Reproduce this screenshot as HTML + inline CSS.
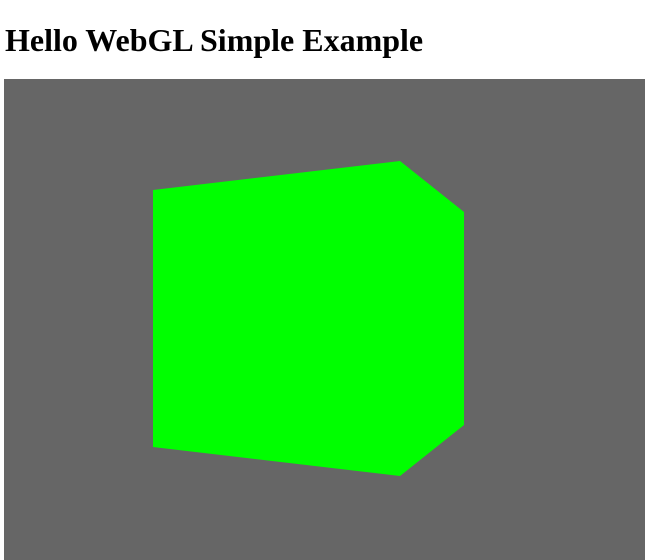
<!DOCTYPE html>
<html><head><style>
body{margin:0;background:#fff;width:645px;height:560px;overflow:hidden;position:relative}
h1{position:absolute;left:5px;top:22px;margin:0;font:bold 32px "Liberation Serif",serif;color:#000;white-space:nowrap}
#c{position:absolute;left:4px;top:79px;width:641px;height:481px;background:#666}
svg{position:absolute;left:0;top:0}
</style></head><body>
<h1>Hello WebGL Simple Example</h1>
<div id="c"></div>
<svg width="645" height="560"><polygon points="153,190 400,161 464,212 464,425 400,476 153,447" fill="#00ff00"/></svg>
</body></html>
